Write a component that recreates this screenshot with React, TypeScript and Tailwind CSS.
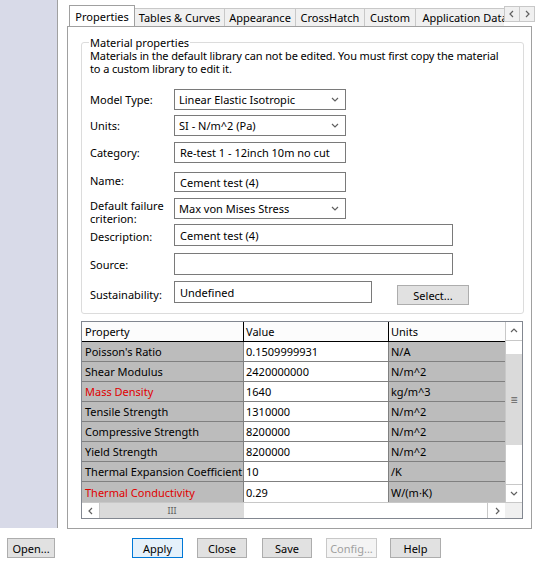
import React from "react";

const rows = [
  { p: "Poisson's Ratio", v: "0.1509999931", u: "N/A" },
  { p: "Shear Modulus", v: "2420000000", u: "N/m^2" },
  { p: "Mass Density", v: "1640", u: "kg/m^3", red: true },
  { p: "Tensile Strength", v: "1310000", u: "N/m^2" },
  { p: "Compressive Strength", v: "8200000", u: "N/m^2" },
  { p: "Yield Strength", v: "8200000", u: "N/m^2" },
  { p: "Thermal Expansion Coefficient", v: "10", u: "/K" },
  { p: "Thermal Conductivity", v: "0.29", u: "W/(m·K)", red: true },
];

function Chevron({ dir = "down", className = "" }: { dir?: "down" | "up" | "left" | "right"; className?: string }) {
  const d = {
    down: "M1 2 L4 5 L7 2",
    up: "M1 5 L4 2 L7 5",
    left: "M5 1 L2 4 L5 7",
    right: "M3 1 L6 4 L3 7",
  }[dir];
  return (
    <svg className={className} width="8" height="8" viewBox="0 0 8 8" fill="none">
      <path d={d} stroke="#606060" strokeWidth="1.2" />
    </svg>
  );
}

function Select({ value, w }: { value: string; w: string }) {
  return (
    <div className={`${w} h-[21px] flex items-center justify-between border border-[#7a7a7a] bg-white pl-[4px] pr-[6px]`}>
      <span>{value}</span>
      <Chevron />
    </div>
  );
}

function Input({ value, w, h = "h-[21px]" }: { value?: string; w: string; h?: string }) {
  return (
    <div className={`${w} ${h} flex items-center border border-[#7a7a7a] bg-white px-[5px]`}>
      {value}
    </div>
  );
}

function Btn({ children, className = "" }: { children: React.ReactNode; className?: string }) {
  return (
    <div className={`h-[20px] flex items-center justify-center border ${className}`}>
      {children}
    </div>
  );
}

const tabs = [
  { t: "Tables & Curves", w: "w-[91px]" },
  { t: "Appearance", w: "w-[72px]" },
  { t: "CrossHatch", w: "w-[70px]" },
  { t: "Custom", w: "w-[52px]" },
  { t: "Application Data", w: "w-[100px]" },
];

export default function App() {
  return (
    <div className="w-[540px] h-[563px] bg-white text-[11px] leading-[13px] text-black font-['Noto_Sans',sans-serif] overflow-hidden">
      <div className="flex h-[529px]">
        {/* left pane */}
        <div className="w-[58px] h-[528px] shrink-0 bg-[#d8dae8] border-r border-[#a0a0a0]" />

        {/* tab control */}
        <div className="ml-[9px] w-[468px] flex flex-col">
          <div className="h-[26px] flex items-end relative">
            <div className="w-[436px] ml-[2px] flex items-end overflow-hidden">
              <div className="w-[66px] h-[22px] shrink-0 -mb-px relative z-10 bg-white border border-b-0 border-[#a0a0a0] flex items-center justify-center pb-[1px]">
                Properties
              </div>
              {tabs.map((tab) => (
                <div
                  key={tab.t}
                  className={`${tab.w} h-[18px] shrink-0 -ml-px bg-[#f0f0f0] border border-b-0 border-[#c8c8c8] flex items-center justify-center whitespace-nowrap`}
                >
                  {tab.t}
                </div>
              ))}
            </div>
            <div className="flex self-start mt-[6px]">
              <div className="w-[16px] h-[16px] border border-[#c8c8c8] bg-[#f0f0f0] flex items-center justify-center">
                <Chevron dir="left" />
              </div>
              <div className="w-[16px] h-[16px] -ml-px border border-[#c8c8c8] bg-[#f0f0f0] flex items-center justify-center">
                <Chevron dir="right" />
              </div>
            </div>
          </div>

          <div className="w-[465px] h-[503px] border border-[#a0a0a0] bg-white pl-[13px] pt-[9px]">
            <fieldset className="w-[443px] border border-[#dcdcdc] rounded-[3px] px-[8px] pb-[10px]">
              <legend className="px-[1px] -ml-[1px]">Material properties</legend>
              <p className="tracking-[-0.12px]">
                Materials in the default library can not be edited. You must first copy the material
                <br />
                to a custom library to edit it.
              </p>

              <div className="mt-[14px] flex items-center h-[21px]">
                <span className="w-[84px]">Model Type:</span>
                <Select value="Linear Elastic Isotropic" w="w-[172px]" />
              </div>
              <div className="mt-[5px] flex items-center h-[21px]">
                <span className="w-[84px]">Units:</span>
                <Select value="SI - N/m^2 (Pa)" w="w-[172px]" />
              </div>
              <div className="mt-[6px] flex items-center h-[21px]">
                <span className="w-[84px]">Category:</span>
                <Input value="Re-test 1 - 12inch 10m no cut" w="w-[172px]" />
              </div>
              <div className="mt-[9px] flex items-center h-[20px]">
                <span className="w-[84px] -mt-[4px]">Name:</span>
                <Input value="Cement test (4)" w="w-[172px]" h="h-[20px]" />
              </div>
              <div className="mt-[6px] flex items-start h-[21px]">
                <span className="w-[84px] mt-[1px]">
                  Default failure
                  <br />
                  criterion:
                </span>
                <Select value="Max von Mises Stress" w="w-[172px]" />
              </div>
              <div className="mt-[5px] flex items-center h-[22px]">
                <span className="w-[84px] mt-[2px]">Description:</span>
                <Input value="Cement test (4)" w="w-[279px]" h="h-[22px]" />
              </div>
              <div className="mt-[7px] flex items-center h-[22px]">
                <span className="w-[84px]">Source:</span>
                <Input w="w-[279px]" h="h-[22px]" />
              </div>
              <div className="mt-[6px] flex items-start h-[22px]">
                <span className="w-[84px] mt-[7px]">Sustainability:</span>
                <Input value="Undefined" w="w-[198px]" h="h-[22px]" />
                <Btn className="ml-[25px] mt-[4px] w-[72px] bg-[#e1e1e1] border-[#adadad]">Select...</Btn>
              </div>
            </fieldset>

            {/* property table */}
            <div className="mt-[7px] w-[442px] h-[198px] border border-[#828790] flex flex-col">
              <div className="flex h-[180px]">
                <div className="w-[423px] flex flex-col">
                  <div className="flex h-[20px] bg-[#fcfcfc] border-b border-black">
                    <div className="w-[162px] border-r border-black pl-[3px] flex items-center">Property</div>
                    <div className="w-[145px] border-r border-black pl-[2px] flex items-center">Value</div>
                    <div className="w-[116px] pl-[2px] flex items-center">Units</div>
                  </div>
                  {rows.map((r) => (
                    <div key={r.p} className="flex h-[20px] border-b border-[#808080] last:border-b-0">
                      <div
                        className={`w-[162px] bg-[#bcbcbc] border-r border-[#808080] pl-[3px] flex items-center ${
                          r.red ? "text-[#e00000]" : "text-black"
                        }`}
                      >
                        {r.p}
                      </div>
                      <div className="w-[145px] bg-white border-r border-[#808080] pl-[2px] flex items-center">{r.v}</div>
                      <div className="w-[116px] bg-[#bcbcbc] pl-[2px] flex items-center">{r.u}</div>
                    </div>
                  ))}
                </div>
                {/* vertical scrollbar */}
                <div className="w-[17px] flex flex-col border-l border-[#c8c8c8] bg-white">
                  <div className="h-[19px] border-b border-[#c8c8c8] flex items-center justify-center">
                    <Chevron dir="up" />
                  </div>
                  <div className="h-[13px]" />
                  <div className="h-[91px] bg-[#dadada] flex items-center justify-center">
                    <span className="text-[#606060] text-[12px]">≡</span>
                  </div>
                  <div className="flex-1" />
                  <div className="h-[18px] border-t border-[#c8c8c8] flex items-center justify-center">
                    <Chevron dir="down" />
                  </div>
                </div>
              </div>
              {/* horizontal scrollbar */}
              <div className="flex h-[16px] border-t border-[#c8c8c8]">
                <div className="w-[18px] border-r border-[#c8c8c8] flex items-center justify-center">
                  <Chevron dir="left" />
                </div>
                <div className="w-[144px] bg-[#dadada] flex items-center justify-center text-[#606060] text-[9px]">
                  III
                </div>
                <div className="flex-1 bg-white" />
                <div className="w-[18px] border-l border-[#c8c8c8] flex items-center justify-center">
                  <Chevron dir="right" />
                </div>
                <div className="w-[17px] bg-[#f0f0f0]" />
              </div>
            </div>
          </div>
        </div>
      </div>

      {/* bottom buttons */}
      <div className="flex mt-[9px]">
        <Btn className="ml-[7px] w-[48px] bg-[#e1e1e1] border-[#adadad]">Open...</Btn>
        <Btn className="ml-[77px] w-[51px] bg-[#e5f1fb] border-[#0078d7]">Apply</Btn>
        <Btn className="ml-[14px] w-[50px] bg-[#e1e1e1] border-[#adadad]">Close</Btn>
        <Btn className="ml-[15px] w-[50px] bg-[#e1e1e1] border-[#adadad]">Save</Btn>
        <Btn className="ml-[14px] w-[51px] bg-[#f4f4f4] border-[#c8c8c8] text-[#a0a0a0]">Config...</Btn>
        <Btn className="ml-[13px] w-[51px] bg-[#e1e1e1] border-[#adadad]">Help</Btn>
      </div>
    </div>
  );
}
